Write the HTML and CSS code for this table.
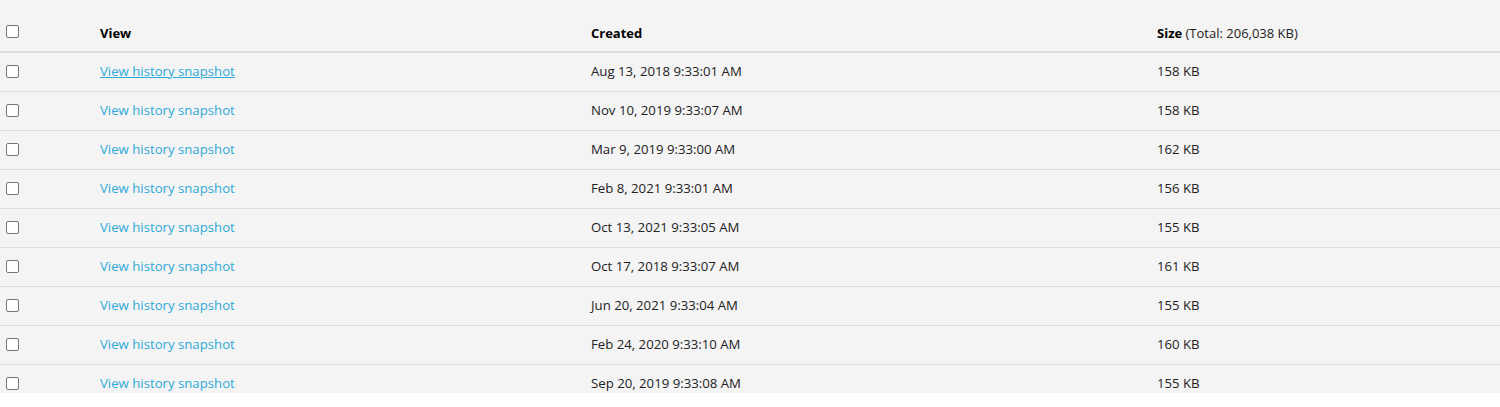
FILE: index.html
```html
<!DOCTYPE html>
<html lang="en">
<head>
<meta charset="utf-8">
<title>History snapshots</title>
<link rel="stylesheet" href="styles.css">
</head>
<body>
<div class="panel">
<table class="grid">
<thead>
<tr>
<th class="c-check"><input type="checkbox" class="cb"></th>
<th class="c-view">View</th>
<th class="c-created">Created</th>
<th class="c-size">Size <span class="total">(Total: 206,038 KB)</span></th>
</tr>
</thead>
<tbody>
<tr><td class="c-check"><input type="checkbox" class="cb"></td><td><a href="#" class="link hover">View history snapshot</a></td><td>Aug 13, 2018 9:33:01 AM</td><td>158 KB</td></tr>
<tr><td class="c-check"><input type="checkbox" class="cb"></td><td><a href="#" class="link">View history snapshot</a></td><td>Nov 10, 2019 9:33:07 AM</td><td>158 KB</td></tr>
<tr><td class="c-check"><input type="checkbox" class="cb"></td><td><a href="#" class="link">View history snapshot</a></td><td>Mar 9, 2019 9:33:00 AM</td><td>162 KB</td></tr>
<tr><td class="c-check"><input type="checkbox" class="cb"></td><td><a href="#" class="link">View history snapshot</a></td><td>Feb 8, 2021 9:33:01 AM</td><td>156 KB</td></tr>
<tr><td class="c-check"><input type="checkbox" class="cb"></td><td><a href="#" class="link">View history snapshot</a></td><td>Oct 13, 2021 9:33:05 AM</td><td>155 KB</td></tr>
<tr><td class="c-check"><input type="checkbox" class="cb"></td><td><a href="#" class="link">View history snapshot</a></td><td>Oct 17, 2018 9:33:07 AM</td><td>161 KB</td></tr>
<tr><td class="c-check"><input type="checkbox" class="cb"></td><td><a href="#" class="link">View history snapshot</a></td><td>Jun 20, 2021 9:33:04 AM</td><td>155 KB</td></tr>
<tr><td class="c-check"><input type="checkbox" class="cb"></td><td><a href="#" class="link">View history snapshot</a></td><td>Feb 24, 2020 9:33:10 AM</td><td>160 KB</td></tr>
<tr><td class="c-check"><input type="checkbox" class="cb"></td><td><a href="#" class="link">View history snapshot</a></td><td>Sep 20, 2019 9:33:08 AM</td><td>155 KB</td></tr>
</tbody>
</table>
</div>
</body>
</html>
```

FILE: styles.css
```css
html, body {
  margin: 0;
  padding: 0;
  background: #ffffff;
}
body {
  font-family: "Open Sans", "Noto Sans", "Liberation Sans", sans-serif;
  font-size: 13px;
  color: #222222;
}
.panel {
  height: 393px;
  overflow: hidden;
  background: #f4f4f4;
}
.grid {
  width: 100%;
  border-collapse: collapse;
  table-layout: fixed;
}
.grid th, .grid td {
  padding: 0;
  text-align: left;
  white-space: nowrap;
}
.grid th {
  height: 42px;
  padding-top: 0;
  padding-bottom: 9px;
  vertical-align: bottom;
  font-weight: 700;
  color: #000000;
  line-height: 18px;
  border-bottom: 2px solid #dcdcdc;
}
.grid td {
  height: 36px;
  padding-bottom: 2px;
  font-size: 13.2px;
  line-height: 18px;
  vertical-align: middle;
  border-bottom: 1px solid #dedede;
}
.c-check { width: 100px; padding-left: 6px !important; box-sizing: border-box; }
.c-view { width: 491px; }
.c-created { width: 566px; }
.total { font-weight: 400; color: #222222; }
.cb {
  appearance: none;
  -webkit-appearance: none;
  display: block;
  width: 13px;
  height: 13px;
  margin: 0;
  border: 1px solid #767676;
  border-radius: 2px;
  background: #ffffff;
  box-sizing: border-box;
}
.grid th .cb { margin-bottom: 4px; }
.link {
  color: #2eaad8;
  text-decoration: none;
}
.link.hover {
  text-decoration: underline;
}
```
